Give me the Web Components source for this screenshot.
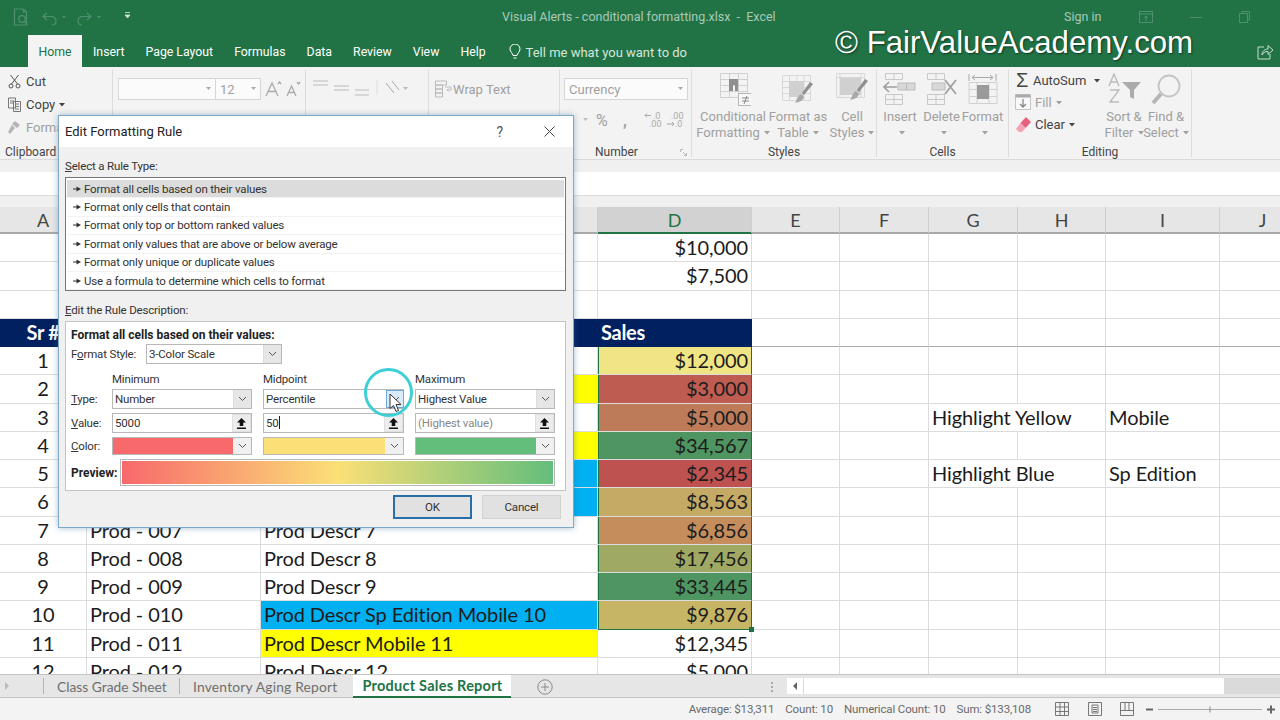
<!DOCTYPE html>
<html lang="en">
<head>
<meta charset="utf-8">
<title>Visual Alerts - conditional formatting.xlsx - Excel</title>
<style>
  html, body { margin: 0; height: 720px; overflow: hidden; background: #fff; }
  body { font-family: Roboto, "Liberation Sans", sans-serif; }
</style>
</head>
<body>

<excel-window>
  <title-bar></title-bar>
  <ribbon-tabs></ribbon-tabs>
  <ribbon-bar></ribbon-bar>
  <formula-strip></formula-strip>
  <sheet-grid></sheet-grid>
  <sheet-tabs></sheet-tabs>
  <status-bar></status-bar>
  <rule-dialog></rule-dialog>
</excel-window>

<script>
// small helper, every element below is just css + markup in an open shadow root
function component(tag, css, html) {
  customElements.define(tag, class extends HTMLElement {
    connectedCallback() {
      if (this.shadowRoot) return;
      const tpl = document.createElement('template');
      tpl.innerHTML = `<style>${css}</style>` + (typeof html === 'function' ? html(this) : html);
      this.attachShadow({ mode: 'open' }).appendChild(tpl.content.cloneNode(true));
    }
  });
}

const chevron = `<svg width="9" height="6" viewBox="0 0 9 6"><path d="M1 1l3.5 3.5L8 1" fill="none" stroke="#555" stroke-width="1"/></svg>`;
const caret = `<svg width="6" height="4" viewBox="0 0 6 4" style="margin-left:4px;vertical-align:2px"><path d="M0 0h6L3 3.5z" fill="currentColor"/></svg>`;

// ---- root
component('excel-window', `
  :host { display: flex; flex-direction: column; position: relative; width: 1280px; height: 720px; overflow: hidden; }
`, `<slot></slot>`);

// ---- title bar
component('title-bar', `
  :host { display: flex; align-items: center; height: 35px; background: #217346; color: #a9c9b7; font: 12.500px Roboto, sans-serif; flex: none; padding-bottom: 2px; box-sizing: border-box; }
  .qat { display: flex; align-items: center; width: 502px; box-sizing: border-box; padding-left: 13px; flex: none; }
  .title { width: 280px; flex: none; white-space: pre; }
  .sign { margin-left: 282px; width: 75px; flex: none; }
  .win { display: flex; align-items: center; gap: 36px; }
  svg { display: block; }
`, `
  <div class="qat">
    <svg width="125" height="20" viewBox="0 0 125 20" fill="none" stroke="#4f9070" stroke-width="1.2">
      <path d="M1.5 2h9l3 3v13h-12zM10.500 2v3h3"/><circle cx="9" cy="12" r="3.300"/><path d="M11.500 14.500l3 3"/>
      <path d="M34 6l-4 3.500 4 3.500M30 9.500h8c3.500 0 5 2 5 4.500s-1.500 4-4 4"/>
      <path d="M49 9h4l-2 2.500z" fill="#4f9070" stroke="none"/>
      <path d="M74 6l4 3.500-4 3.500M78 9.500h-8c-3.500 0-5 2-5 4.500s1.500 4 4 4"/>
      <path d="M84 9h4l-2 2.500z" fill="#4f9070" stroke="none"/>
      <path d="M112 5.500h5M112 8h5l-2.500 3z" stroke="#d5e5dc" fill="#d5e5dc" stroke-width=".8"/>
    </svg>
  </div>
  <div class="title">Visual Alerts - conditional formatting.xlsx  -  Excel</div>
  <div class="sign">Sign in</div>
  <div class="win">
    <svg width="14" height="12" viewBox="0 0 14 12" fill="none" stroke="#4f9070"><path d="M.5.5h13v11H.5zM.5 3h13M7 10V5M5 7l2-2 2 2"/></svg>
    <svg width="14" height="12" viewBox="0 0 14 12" fill="none" stroke="#4f9070"><path d="M1 6.500h12"/></svg>
    <svg width="11" height="12" viewBox="0 0 11 12" fill="none" stroke="#4f9070"><path d="M.5 2.500h8v9h-8zM3 2.500v-2h7.500v8.500h-2"/></svg>
  </div>
`);

// ---- tab strip, the big watermark text sits over it
component('ribbon-tabs', `
  :host { display: flex; align-items: center; position: relative; height: 32px; background: #217346; color: #fff; font: 12.300px Roboto, sans-serif; flex: none; padding-left: 28px; box-sizing: border-box; }
  .tab { margin-right: 21px; padding-top: 2px; white-space: nowrap; }
  .home { align-self: stretch; display: flex; align-items: center; justify-content: center; width: 54px; box-sizing: border-box; background: #f3f3f3; color: #217346; margin-right: 11px; }
  .tell { display: flex; align-items: center; gap: 5px; margin-left: 2px; color: #d5e5dc; padding-top: 2px; white-space: nowrap; font-size: 13px; }
  .mark { position: absolute; left: 835px; top: -11px; font: 31.200px/1.2 "Liberation Sans", sans-serif; color: #fff; text-shadow: 1px 1px 2px rgba(0,0,0,.55); white-space: nowrap; }
  .share { position: absolute; left: 1257px; top: 9px; }
`, `
  <div class="tab home">Home</div>
  <div class="tab">Insert</div>
  <div class="tab">Page Layout</div>
  <div class="tab">Formulas</div>
  <div class="tab">Data</div>
  <div class="tab">Review</div>
  <div class="tab">View</div>
  <div class="tab">Help</div>
  <div class="tell">
    <svg width="12" height="16" viewBox="0 0 12 16" fill="none" stroke="#fff" stroke-width="1"><path d="M4 11.500c0-2-3-3.500-3-6.500a5 5 0 0 1 10 0c0 3-3 4.500-3 6.500zM4.500 14h3"/></svg>
    <span>Tell me what you want to do</span>
  </div>
  <div class="mark">© FairValueAcademy.com</div>
  <svg class="share" width="17" height="16" viewBox="0 0 17 16" fill="none" stroke="#c9dcd1"><path d="M7 3H1v12h12v-5M5 11c0-4 3-6 6-6V1.500L16 6l-5 4.500V7.500c-3 0-5 1-6 3.500z"/></svg>
`);

// ---- ribbon pieces
component('ribbon-group', `
  :host { display: flex; flex-direction: column; box-sizing: border-box; height: 87px; border-right: 1px solid #dcdcdc; flex: none; }
  .body { flex: 1; display: flex; min-height: 0; }
  .label { height: 16px; line-height: 16px; font-size: 12px; text-align: center; color: #444; position: relative; top: 3px; white-space: nowrap; padding: var(--label-pad, 0); }
  :host([left]) .label { text-align: left; }
`, el => `
  <div class="body"><slot></slot></div>
  <div class="label">${el.getAttribute('label') || ''}<slot name="after"></slot></div>
`);

component('ribbon-tool', `
  :host { display: flex; flex-direction: column; align-items: center; flex: none; color: #a0a0a0; font-size: 13px; line-height: 16px; text-align: center; white-space: nowrap; }
  .icon { height: 36px; margin-top: 3px; }
`, `<div class="icon"><slot name="icon"></slot></div><slot></slot>`);

component('ribbon-bar', `
  :host { display: flex; box-sizing: border-box; height: 93px; padding-top: 3px; background: #f3f3f3; border-bottom: 1px solid #dadada; font: 13px Roboto, sans-serif; color: #444; flex: none; }
  .row { display: flex; align-items: center; height: 23px; white-space: nowrap; }
  .clip { display: flex; flex-direction: column; padding: 0 0 0 8px; width: 100%; box-sizing: border-box; }
  .clip svg { margin-right: 5px; }
  .muted { color: #a0a0a0; }
  .cutoff { width: 32px; overflow: hidden; }
  .combo { display: flex; align-items: center; box-sizing: border-box; height: 22px; background: #fbfbfb; border: 1px solid #d6d6d6; color: #a0a0a0; font-size: 13px; padding: 0 4px; justify-content: space-between; }
  .font { display: flex; align-items: flex-start; padding: 8px 0 0 5px; }
  .font .combo + .combo { border-left: 1px solid #d6d6d6; margin-left: -1px; }
  .align { display: flex; align-items: flex-start; }
  .num { padding: 8px 0 0 4px; width: 100%; box-sizing: border-box; }
  .num .second { display: flex; align-items: center; height: 18px; margin-top: 11px; color: #a0a0a0; font-size: 16px; }
  .tools { display: flex; }
  .edit { display: flex; padding-left: 7px; }
  .edit .left { width: 87px; display: flex; flex-direction: column; margin-top: -1px; }
  .edit .row { height: 22px; }
  .lnch { position: absolute; right: 3px; top: 3px; }
`, `
  <ribbon-group label="Clipboard" left style="width:113px;--label-pad:0 0 0 5px">
    <div class="clip">
      <div class="row">
        <svg width="13" height="15" viewBox="0 0 13 15" fill="none" stroke="#555"><path d="M2.500 1l7 9M10.500 1l-7 9"/><circle cx="3" cy="12" r="2"/><circle cx="10" cy="12" r="2"/></svg>
        <span>Cut</span>
      </div>
      <div class="row">
        <svg width="13" height="15" viewBox="0 0 13 15" fill="none" stroke="#777"><path d="M.5 1h7v10h-7zM5.500 4.500h7v10h-7zM2 4h4M2 6h3M7 7h4M7 9.500h4M7 12h4"/></svg>
        <span>Copy${caret}</span>
      </div>
      <div class="row muted">
        <svg width="13" height="15" viewBox="0 0 13 15"><path d="M7 1l5 4-3 3-5-4zM4 5l3 3-5 6-2-2z" fill="#b5b5b5"/></svg>
        <span class="cutoff">Format</span>
      </div>
    </div>
  </ribbon-group>

  <ribbon-group style="width:193px">
    <div class="font">
      <div class="combo" style="width:98px"><span></span><svg width="5" height="4"><path d="M0 0h5L2.500 3z" fill="#aaa"/></svg></div>
      <div class="combo" style="width:46px"><span>12</span><svg width="5" height="4"><path d="M0 0h5L2.500 3z" fill="#aaa"/></svg></div>
      <svg style="margin:3px 0 0 4px" width="36" height="18" viewBox="0 0 36 18" fill="none" stroke="#aaa" stroke-width="1.300"><path d="M1 15L7 2l6 13M3.500 10.500h7M13 3l1.500-2L16 3" /><path d="M22 15l4.500-10L31 15M23.500 11.500h6M32 1l1.500 2L35 1"/></svg>
    </div>
  </ribbon-group>

  <ribbon-group style="width:254px">
    <div class="align">
      <svg width="122" height="70" viewBox="0 0 122 70" fill="none" stroke="#bbb" style="border-right:1px solid #dcdcdc">
        <path d="M7 11h15M7 15h15M28 16h15M28 20h15M49 20h14M49 25h14"/>
        <path d="M71 10v15" stroke="#ddd"/><path d="M80 13l8 10M86 11l7 9" stroke="#aaa"/><path d="M97 17h5l-2.500 3z" fill="#bbb" stroke="none"/>
      </svg>
      <div class="row muted" style="margin:8px 0 0 6px">
        <svg width="17" height="20" viewBox="0 0 17 20" fill="none" stroke="#bbb" style="margin-right:1px"><path d="M.5 1h11v4H.5zM.5 5h7v4H.5zM.5 9h7v4H.5zM.5 13h7v4H.5zM10 7h6v3h-4l1.500-1.500M12 10l1.500 1.500"/></svg>
        <span>Wrap Text</span>
      </div>
    </div>
  </ribbon-group>

  <ribbon-group label="Number" style="width:132px;position:relative;--label-pad:0 18px 0 0">
    <div class="num">
      <div class="combo" style="width:124px"><span>Currency</span><svg width="5" height="4"><path d="M0 0h5L2.500 3z" fill="#aaa"/></svg></div>
      <div class="second">
        <span style="width:14px"></span>
        <svg width="5" height="4" style="margin:0 8px 0 5px"><path d="M0 0h5L2.500 3z" fill="#bbb"/></svg>
        <span style="width:27px">%</span><span style="font-weight:700;width:21px">,</span>
        <svg width="40" height="18" viewBox="0 0 40 18" fill="none" stroke="#aaa"><path d="M1 4.500h6M3 2.500l-2 2 2 2"/><path d="M23 13h7M28 11l2 2-2 2"/><text x="9" y="8" font-size="9" fill="#aaa" stroke="none">.0</text><text x="27" y="8" font-size="9" fill="#aaa" stroke="none">.00</text><text x="5" y="16" font-size="9" fill="#aaa" stroke="none">.00</text><text x="31" y="16" font-size="9" fill="#aaa" stroke="none">.0</text></svg>
      </div>
    </div>
    <svg slot="after" class="lnch" style="position:absolute;right:4px;top:5px" width="7" height="7" viewBox="0 0 7 7" fill="none" stroke="#bbb"><path d="M.5 3V.5H3M3 3l3.500 3.500M4 6.500h2.500V4"/></svg>
  </ribbon-group>

  <ribbon-group label="Styles" style="width:185px">
    <div class="tools" style="padding-left:7px">
      <ribbon-tool style="width:68px">
        <svg slot="icon" width="36" height="36" viewBox="0 0 36 36" fill="none" stroke="#d0d0d0">
          <path d="M5.500 .5h27v24h-27zM14.500 .5v24M23.500 .5v24M5.500 6.500h27M5.500 12.500h27M5.500 18.500h27"/>
          <path d="M14 6h9v12h-3v-6h-2v6h-4z" fill="#8f8f8f" stroke="none"/>
          <path d="M23.500 20.500h14v12h-14z" fill="#f6f6f6" stroke="#b5b5b5"/>
          <path d="M27 25h7M27 28h7M29 31l3-8" stroke="#888"/>
        </svg>
        <span>Conditional</span><span>Formatting${caret}</span>
      </ribbon-tool>
      <ribbon-tool style="width:62px">
        <svg slot="icon" width="32" height="36" viewBox="0 0 32 36" fill="none" stroke="#d8d8d8">
          <path d="M.5 2.500h28v25H.5z"/><path d="M.5 8.500h28M.5 14.500h28M.5 20.500h28M7.500 2.500v25M15 2.500v25M22 2.500v25"/>
          <path d="M7 8h15v16H7z" fill="#d0d0d0" stroke="none"/>
          <path d="M31 11l-9 11-2-2 8-11z" fill="#8f8f8f" stroke="none"/>
          <path d="M19 21l3 3c-1 4-5 5-9 6 2-2 2-7 6-9z" fill="#a8a8a8" stroke="none"/>
        </svg>
        <span>Format as</span><span>Table${caret}</span>
      </ribbon-tool>
      <ribbon-tool style="width:46px">
        <svg slot="icon" width="34" height="36" viewBox="0 0 34 36" fill="none" stroke="#d8d8d8">
          <path d="M1.500 .5h28v24h-28zM1.500 4.500h28M5 .5v24M26 .5v24"/>
          <path d="M5 5h21v17H5z" fill="#d0d0d0" stroke="none"/>
          <path d="M33 8l-9 11-2-2 8-11z" fill="#8f8f8f" stroke="none"/>
          <path d="M21 18l3 3c-1 4-5 5-9 6 2-2 2-7 6-9z" fill="#a8a8a8" stroke="none"/>
        </svg>
        <span>Cell</span><span>Styles${caret}</span>
      </ribbon-tool>
    </div>
  </ribbon-group>

  <ribbon-group label="Cells" style="width:132px">
    <div class="tools" style="padding-left:2px">
      <ribbon-tool style="width:42px">
        <svg slot="icon" width="34" height="36" viewBox="0 0 34 36" fill="none" stroke="#c8c8c8">
          <path d="M2.500 .5h17v6h-17zM11 .5v6M2.500 21.500h17v10h-17zM2.500 26.500h17M11 21.500v10"/>
          <path d="M1 14h13M6 9l-5 5 5 5" stroke="#a0a0a0" stroke-width="1.600"/>
          <path d="M15 10h17v7H15zM23.500 10v7" fill="#d8d8d8" stroke="#bbb"/>
        </svg>
        <span>Insert</span><span>${caret}</span>
      </ribbon-tool>
      <ribbon-tool style="width:41px">
        <svg slot="icon" width="34" height="36" viewBox="0 0 34 36" fill="none" stroke="#c8c8c8">
          <path d="M2.500 .5h17v6h-17zM11 .5v6M2.500 21.500h17v10h-17zM2.500 26.500h17M11 21.500v10"/>
          <path d="M7 10h13v7H7z" fill="#d8d8d8" stroke="#bbb"/>
          <path d="M20 7l11 14M31 7L20 21" stroke="#a0a0a0" stroke-width="1.800"/>
        </svg>
        <span>Delete</span><span>${caret}</span>
      </ribbon-tool>
      <ribbon-tool style="width:41px">
        <svg slot="icon" width="32" height="36" viewBox="0 0 32 36" fill="none" stroke="#d0d0d0">
          <path d="M2 1v7M29 1v7M5 4.500h21M8 2l-3 2.500L8 7M23 2l3 2.500L23 7" stroke="#a8a8a8"/>
          <path d="M2 9.500h28v21H2zM10 9.500v21M22 9.500v21M2 16.500h28M2 23.500h28"/>
          <path d="M10 12h12v14H10z" fill="#9a9a9a" stroke="none"/>
        </svg>
        <span>Format</span><span>${caret}</span>
      </ribbon-tool>
    </div>
  </ribbon-group>

  <ribbon-group label="Editing" style="width:183px">
    <div class="edit">
      <div class="left">
        <div class="row">
          <span style="font:20px 'Liberation Sans',sans-serif;width:17px;color:#444">Σ</span><span>AutoSum</span><span style="margin-left:4px">${caret}</span>
        </div>
        <div class="row muted" style="margin-left:-1px">
          <svg width="17" height="18" viewBox="0 0 17 18" fill="none" style="margin-right:3px"><path d="M.5 1.500h15v15H.5z" stroke="#c4c4c4" fill="#f9f9f9"/><path d="M.5 1.500h15v3H.5z" fill="#aaa"/><path d="M8 6v8M5 11l3 3 3-3" stroke="#888" stroke-width="1.300"/></svg>
          <span>Fill${caret}</span>
        </div>
        <div class="row">
          <svg width="16" height="18" viewBox="0 0 16 18" style="margin-right:3px"><path d="M10 2l5 5-5.500 6-5-5z" fill="#e8607f"/><path d="M4.500 8l5 5-3.500 4H3l-3-3z" fill="#f3a3b5"/></svg>
          <span>Clear${caret}</span>
        </div>
      </div>
      <ribbon-tool style="width:42px">
        <svg slot="icon" width="34" height="34" viewBox="0 0 34 34" fill="none" stroke="#bcbcbc" stroke-width="1.400">
          <path d="M2 13L7 1l5 12M4 9h6M3 17h9L3 29h9"/>
          <path d="M15 9h19l-7 8v9l-4-2v-7z" fill="#ababab" stroke="none"/>
        </svg>
        <span>Sort &amp;</span><span>Filter${caret}</span>
      </ribbon-tool>
      <ribbon-tool style="width:42px">
        <svg slot="icon" width="34" height="34" viewBox="0 0 34 34" fill="none">
          <circle cx="20" cy="13" r="10.500" stroke="#c4c4c4" stroke-width="1.800"/>
          <path d="M12 21L4 30" stroke="#b5b5b5" stroke-width="4"/>
        </svg>
        <span>Find &amp;</span><span>Select${caret}</span>
      </ribbon-tool>
    </div>
  </ribbon-group>
`);

// ---- strip between ribbon and column letters
component('formula-strip', `
  :host { display: flex; flex-direction: column; height: 47px; background: #f0f0f0; flex: none; }
  .bar { height: 23px; margin-top: 12px; background: #fff; border-bottom: 1px solid #dcdcdc; }
`, `<div class="bar"></div>`);

// ---- the sheet itself. B and C letters sit under the dialog so they stay empty
const cols = [
  ['A', 87], ['', 174], ['', 337], ['D', 154], ['E', 88], ['F', 89],
  ['G', 89], ['H', 88], ['I', 114], ['J', 86]
];

const sheetRows = [
  { d: '$10,000' },
  { d: '$7,500' },
  {},
  { head: true, a: 'Sr #', d: 'Sales' },
  { a: '1', d: '$12,000', fill: '#efe585', sel: 'top' },
  { a: '2', d: '$3,000', fill: '#bf5c52', c2: '#ffff00', sel: 'mid' },
  { a: '3', d: '$5,000', fill: '#bd7b59', g: 'Highlight Yellow', i: 'Mobile', sel: 'mid' },
  { a: '4', d: '$34,567', fill: '#4f9561', c2: '#ffff00', sel: 'mid' },
  { a: '5', d: '$2,345', fill: '#bd5250', c2: '#00b0f0', g: 'Highlight Blue', i: 'Sp Edition', sel: 'mid' },
  { a: '6', d: '$8,563', fill: '#c5aa66', c2: '#00b0f0', sel: 'mid' },
  { a: '7', b: 'Prod - 007', c: 'Prod Descr 7', d: '$6,856', fill: '#c58d5c', sel: 'mid' },
  { a: '8', b: 'Prod - 008', c: 'Prod Descr 8', d: '$17,456', fill: '#a0a964', sel: 'mid' },
  { a: '9', b: 'Prod - 009', c: 'Prod Descr 9', d: '$33,445', fill: '#4f9561', sel: 'mid' },
  { a: '10', b: 'Prod - 010', c: 'Prod Descr Sp Edition Mobile 10', d: '$9,876', fill: '#c7b566', c2: '#00b0f0', sel: 'bot' },
  { a: '11', b: 'Prod - 011', c: 'Prod Descr Mobile 11', d: '$12,345', c2: '#ffff00' },
  { a: '12', b: 'Prod - 012', c: 'Prod Descr 12', d: '$5,000' }
];

function sheetMarkup() {
  let out = cols.map(([letter]) => `<div class="hd ${letter === 'D' ? 'on' : ''}">${letter}</div>`).join('');
  sheetRows.forEach(r => {
    const cls = r.head ? 'cell navy' : 'cell';
    out += `<div class="${cls} mid">${r.a || ''}</div>`;
    out += `<div class="${cls}">${r.b || ''}</div>`;
    out += `<div class="${cls}" style="${r.c2 ? 'background:' + r.c2 : ''}">${r.c || ''}</div>`;
    out += r.head
      ? `<div class="${cls}">${r.d}</div>`
      : `<div class="cell num ${r.sel ? 'sel ' + r.sel : ''}" style="${r.fill ? 'background:' + r.fill : ''}">${r.d || ''}</div>`;
    const line = r.head ? ' frz' : '';
    out += `<div class="cell${line}"></div><div class="cell${line}"></div>`;
    out += r.g
      ? `<div class="cell wide">${r.g}</div>`
      : `<div class="cell${line}"></div><div class="cell${line}"></div>`;
    out += `<div class="cell${line}">${r.i || ''}</div><div class="cell${line}"></div>`;
  });
  return out;
}

component('sheet-grid', `
  :host { display: block; height: 467px; overflow: hidden; flex: none; background: #fff; font: 20px Lato, sans-serif; color: #1c1c1c; }
  .grid { display: grid; grid-template-columns: ${cols.map(c => c[1] + 'px').join(' ')}; grid-template-rows: 27px; grid-auto-rows: 28.25px; }
  .hd { display: flex; align-items: center; justify-content: center; background: #e6e6e6; border-right: 1px solid #cfcfcf; border-bottom: 2px solid #a9a9a9; box-sizing: border-box; font-size: 18px; color: #444; }
  .hd.on { background: #d2d2d2; color: #217346; border-bottom-color: #217346; }
  .cell { box-sizing: border-box; border-right: 1px solid #dcdcdc; border-bottom: 1px solid #dcdcdc; padding: 0 3px; line-height: 27.500px; white-space: nowrap; letter-spacing: -.1px; }
  .mid { text-align: center; }
  .num { text-align: right; padding-right: 3px; }
  .wide { grid-column: span 2; }
  .navy { background: #002060; color: #fff; font-weight: 700; border-color: #002060; letter-spacing: -.3px; }
  .frz { border-bottom-color: #aaa; }
  .sel { border-right-color: #217346; box-shadow: inset 1px 0 0 #217346; position: relative; }
  .sel.top { border-top: 0; }
  .sel.bot { border-bottom: 1px solid #217346; }
  .sel.bot::after { content: ""; position: absolute; right: -3px; bottom: -3px; width: 5px; height: 5px; background: #217346; }
`, `<div class="grid">${sheetMarkup()}</div>`);

// ---- sheet tabs + scrollbar
component('sheet-tabs', `
  :host { display: flex; align-items: stretch; height: 24px; background: #e6e6e6; border-top: 1px solid #c4c4c4; border-bottom: 1px solid #c4c4c4; box-sizing: border-box; font: 13.800px Lato, sans-serif; color: #6e6e6e; flex: none; }
  .arrow { width: 44px; border-right: 1px solid #b5b5b5; margin: 3px 0; box-sizing: border-box; display: flex; align-items: center; padding-left: 5px; }
  .t { display: flex; align-items: center; white-space: nowrap; }
  .sep { border-right: 1px solid #b5b5b5; margin: 3px 0; }
  .active { background: #fff; color: #217346; font: 700 14.500px Lato, sans-serif; letter-spacing: .25px; border-bottom: 2px solid #217346; margin: 0 0 -1px 16px; padding: 0 8px 0 9px; }
  .plus { margin: 4px 0 0 26px; }
  .dots { margin: 7px 0 0 218px; }
  .sb { display: flex; align-items: stretch; margin: 3px 0 3px 13px; flex: 1; }
  .btn { width: 16px; background: #fff; display: flex; align-items: center; justify-content: center; }
  .thumb { width: 420px; background: #fff; border-left: 1px solid #ddd; }
  .rest { flex: 1; background: #dadada; }
`, `
  <div class="arrow"><svg width="5" height="8"><path d="M0 0l4 4-4 4z" fill="#bbb"/></svg></div>
  <div class="t" style="margin-left:13px;width:122px">Class Grade Sheet</div><div class="sep"></div>
  <div class="t" style="margin-left:13px;letter-spacing:.2px">Inventory Aging Report</div>
  <div class="t active">Product Sales Report</div>
  <svg class="plus" width="16" height="16" viewBox="0 0 16 16" fill="none" stroke="#8a8a8a"><circle cx="8" cy="8" r="7.200"/><path d="M8 4v8M4 8h8"/></svg>
  <svg class="dots" width="3" height="10"><path d="M0 0h2v2H0zM0 4h2v2H0zM0 8h2v2H0z" fill="#aaa"/></svg>
  <div class="sb">
    <div class="btn"><svg width="5" height="8"><path d="M5 0L1 4l4 4z" fill="#666"/></svg></div>
    <div class="thumb"></div><div class="rest"></div>
  </div>
`);

// ---- status bar
component('status-bar', `
  :host { display: flex; align-items: center; justify-content: flex-end; height: 22px; background: #f3f3f3; font: 11.500px Roboto, sans-serif; letter-spacing: -.15px; color: #6a6a6a; flex: none; padding-right: 4px; box-sizing: border-box; }
  span { margin-right: 11px; white-space: nowrap; }
  svg { flex: none; }
`, `
  <span>Average: $13,311</span>
  <span>Count: 10</span>
  <span>Numerical Count: 10</span>
  <span style="margin-right:24px">Sum: $133,108</span>
  <svg width="14" height="14" viewBox="0 0 14 14" fill="none" stroke="#777" style="margin-right:19px"><path d="M.5.5h13v13H.5zM.5 5h13M.5 9.500h13M5 .5v13M9.500 .5v13"/></svg>
  <svg width="14" height="14" viewBox="0 0 14 14" fill="none" stroke="#777" style="margin-right:18px"><path d="M.5.5h13v13H.5zM4 3h6v8H4zM5 5.500h4M5 7.500h4M5 9.500h4"/></svg>
  <svg width="14" height="14" viewBox="0 0 14 14" fill="none" stroke="#777" style="margin-right:12px"><path d="M.5.5h13v13H.5zM.5 8.500h13M5 .5v8M9 .5v8"/></svg>
  <svg width="130" height="14" viewBox="0 0 130 14" fill="none" stroke="#666"><path d="M0 7.500h7" stroke-width="2"/><path d="M12 7.500h104" stroke="#aaa"/><path d="M64 4.500v6" stroke="#888"/><path d="M121 7.500h8M125 3.500v8" stroke-width="2"/></svg>
`);

// ---- dialog controls
component('drop-select', `
  :host { display: flex; align-items: center; box-sizing: border-box; height: 20px; background: #fff; border: 1px solid #b8b8b8; font-size: 11.500px; color: #333; padding-left: 2px; justify-content: space-between; }
  .b { width: 18px; height: 18px; background: #e6e6e6; display: flex; align-items: center; justify-content: center; border-left: 1px solid #dcdcdc; box-sizing: border-box; }
  :host([hot]) .b { background: #d9ebfa; border: 1px solid #6ea8d8; margin-right: -1px; }
`, `<slot></slot><div class="b">${chevron}</div>`);

component('ref-input', `
  :host { display: flex; align-items: center; box-sizing: border-box; height: 20px; background: #fff; border: 1px solid #b8b8b8; font-size: 11.500px; color: #333; padding-left: 2px; justify-content: space-between; }
  .b { width: 19px; height: 18px; background: #ececec; border: 1px solid #e0e0e0; display: flex; align-items: center; justify-content: center; box-sizing: border-box; }
  ::slotted(i) { display: inline-block; width: 1px; height: 13px; background: #222; vertical-align: -2px; }
`, `<span><slot></slot></span><div class="b"><svg width="9" height="11" viewBox="0 0 9 11"><path d="M4.500 0L9 4.500H6.300V8H2.700V4.500H0zM0 9.500h9V11H0z" fill="#111"/></svg></div>`);

component('color-pick', `
  :host { display: flex; align-items: center; box-sizing: border-box; height: 18px; background: #fff; border: 1px solid #b8b8b8; }
  .s { flex: 1; align-self: stretch; background: var(--c); }
  .b { width: 18px; display: flex; align-items: center; justify-content: center; background: #f0f0f0; align-self: stretch; }
`, `<div class="s"></div><div class="b">${chevron}</div>`);

component('rule-item', `
  :host { display: flex; align-items: center; height: 18.400px; box-sizing: border-box; padding-left: 6px; gap: 3px; font-size: 11.500px; color: #333; border-bottom: 1px solid #f2f2f2; white-space: nowrap; }
  :host([on]) { background: #dcdcdc; }
`, `<svg width="8" height="6" viewBox="0 0 8 6"><path d="M0 2.400h3.500V.4L8 3 3.500 5.600V3.600H0z" fill="#333"/></svg><slot></slot>`);

// ---- the dialog lies over the sheet, everything inside is flow
component('rule-dialog', `
  :host { position: absolute; left: 58px; top: 115px; width: 516px; height: 413px; box-sizing: border-box; display: flex; flex-direction: column; background: #f0f0f0; border: 1px solid #7ea8c8; box-shadow: 0 0 6px rgba(60,110,150,.45); font: 11.500px Roboto, sans-serif; letter-spacing: -.17px; color: #333; }
  .head { display: flex; align-items: center; height: 31px; flex: none; background: #fff; padding: 0 18px 0 6px; font-size: 13px; letter-spacing: 0; color: #222; }
  .head .t { flex: 1; }
  .head .q { margin-right: 41px; font-size: 14px; color: #555; }
  .cap { padding-left: 6px; height: 14px; line-height: 14px; white-space: nowrap; }
  .list { margin: 4px 7px 0 6px; height: 114px; box-sizing: border-box; flex: none; background: #fff; border: 1px solid #777; padding: 2px 1px 0; }
  .panel { margin: 4px 7px 0 6px; height: 170px; flex: none; box-sizing: border-box; background: #fff; border: 1px solid #c4c4c4; padding: 6px 6px 0 5px; }
  .bold { font-weight: 700; font-size: 12px; letter-spacing: 0; color: #222; height: 14px; line-height: 14px; }
  .style { display: flex; align-items: center; margin-top: 2px; height: 20px; }
  .style span { width: 75px; }
  .scale { display: grid; grid-template-columns: 30px 140px 141px 140px; column-gap: 11px; margin-top: 8px; align-items: center; row-gap: 4px; }
  .scale .lab { white-space: nowrap; }
  .scale .top { margin-bottom: -1px; }
  .prev { display: flex; align-items: center; margin-top: 4px; }
  .prev b { width: 49px; font-size: 12px; letter-spacing: 0; color: #222; }
  .bar { width: 435px; height: 27px; box-sizing: border-box; border: 1px solid #b8b8b8; background: #fff; padding: 1px; }
  .bar div { height: 100%; background: linear-gradient(90deg, #f8696b, #fbe077 50%, #63be7b); }
  .foot { display: flex; justify-content: flex-end; gap: 10px; padding: 4px 12px 0 0; }
  .btn { width: 79px; height: 24px; box-sizing: border-box; display: flex; align-items: center; justify-content: center; background: #e1e1e1; border: 1px solid #d2d2d2; font-size: 11.500px; color: #333; }
  .btn.def { border: 2px solid #2a6ea8; }
  .ring { position: absolute; left: 305px; top: 252px; width: 49px; height: 49px; box-sizing: border-box; border: 3px solid #3ccfd6; border-radius: 50%; }
  .cursor { position: absolute; left: 330px; top: 277px; }
`, `
  <div class="head"><div class="t">Edit Formatting Rule</div><div class="q">?</div>
    <svg width="11" height="11" viewBox="0 0 11 11" fill="none" stroke="#444"><path d="M.5.5l10 10M10.500 .5l-10 10"/></svg>
  </div>
  <div class="cap" style="margin-top:12px"><u>S</u>elect a Rule Type:</div>
  <div class="list">
    <rule-item on>Format all cells based on their values</rule-item>
    <rule-item>Format only cells that contain</rule-item>
    <rule-item>Format only top or bottom ranked values</rule-item>
    <rule-item>Format only values that are above or below average</rule-item>
    <rule-item>Format only unique or duplicate values</rule-item>
    <rule-item>Use a formula to determine which cells to format</rule-item>
  </div>
  <div class="cap" style="margin-top:12px"><u>E</u>dit the Rule Description:</div>
  <div class="panel">
    <div class="bold">Format all cells based on their values:</div>
    <div class="style"><span>F<u>o</u>rmat Style:</span><drop-select style="width:136px">3-Color Scale</drop-select></div>
    <div class="scale">
      <div class="top"></div><div class="top">Minimum</div><div class="top">Midpoint</div><div class="top">Maximum</div>
      <div class="lab"><u>T</u>ype:</div>
      <drop-select>Number</drop-select><drop-select hot>Percentile</drop-select><drop-select>Highest Value</drop-select>
      <div class="lab"><u>V</u>alue:</div>
      <ref-input>5000</ref-input><ref-input>50<i></i></ref-input><ref-input style="color:#888">(Highest value)</ref-input>
      <div class="lab"><u>C</u>olor:</div>
      <color-pick style="--c:#f8696b"></color-pick><color-pick style="--c:#fbe077"></color-pick><color-pick style="--c:#63be7b"></color-pick>
    </div>
    <div class="prev"><b>Preview:</b><div class="bar"><div></div></div></div>
  </div>
  <div class="foot"><div class="btn def">OK</div><div class="btn">Cancel</div></div>
  <div class="ring"></div>
  <svg class="cursor" width="14" height="20" viewBox="0 0 14 20"><path d="M1 1v14.500l3.500-3 2.500 6 2.500-1-2.500-6h5z" fill="#fff" stroke="#333" stroke-width="1"/></svg>
`);
</script>
</body>
</html>
